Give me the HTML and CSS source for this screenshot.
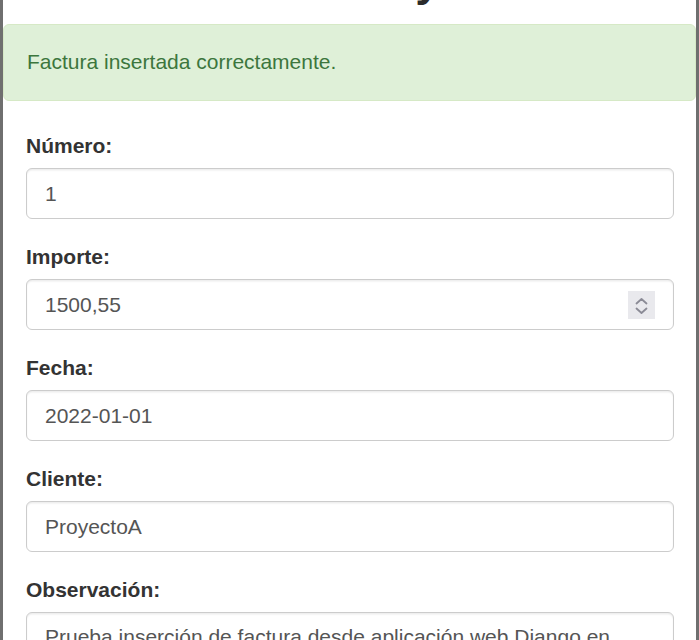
FILE: index.html
```html
<!DOCTYPE html>
<html lang="es">
<head>
<meta charset="utf-8">
<title>Factura</title>
<link rel="stylesheet" href="styles.css">
</head>
<body>
<div class="sheet">
  <h2 class="title">Facturas Proyecto</h2>
  <div class="alert">Factura insertada correctamente.</div>
  <form class="form">
    <div class="group">
      <label class="label">Número:</label>
      <div class="field">1</div>
    </div>
    <div class="group">
      <label class="label">Importe:</label>
      <div class="field">
        <span class="value">1500,55</span>
        <span class="spin">
          <svg width="27" height="28" viewBox="0 0 27 28">
            <path d="M8.5 12.5 L13.5 8 L18.5 12.5" fill="none" stroke="#8b8b96" stroke-width="1.8" stroke-linecap="round" stroke-linejoin="round"/>
            <path d="M8.5 17.5 L13.5 22 L18.5 17.5" fill="none" stroke="#8b8b96" stroke-width="1.8" stroke-linecap="round" stroke-linejoin="round"/>
          </svg>
        </span>
      </div>
    </div>
    <div class="group">
      <label class="label">Fecha:</label>
      <div class="field">2022-01-01</div>
    </div>
    <div class="group">
      <label class="label">Cliente:</label>
      <div class="field">ProyectoA</div>
    </div>
    <div class="group">
      <label class="label">Observación:</label>
      <div class="field field-area">Prueba inserción de factura desde aplicación web Django en Python</div>
    </div>
  </form>
</div>
</body>
</html>
```

FILE: styles.css
```css
html, body {
  margin: 0;
  padding: 0;
  height: 100%;
  overflow: hidden;
}
body {
  background: #6f6f6f;
  font-family: "Liberation Sans", Arial, sans-serif;
  color: #333;
}
.sheet {
  margin: 0 3px;
  background: #fff;
  min-height: 100%;
  padding-top: 1px;
}
.title {
  margin: -45px 0 18px;
  padding-right: 26px;
  white-space: nowrap;
  font-size: 45px;
  line-height: 49.5px;
  font-weight: bold;
  color: #2b2b2b;
  text-align: center;
}
.alert {
  background: #dff0d8;
  border: 1px solid #d6e9c6;
  border-radius: 6px;
  color: #3c763d;
  font-size: 21px;
  line-height: 30px;
  padding: 22px 23px 23px;
  margin-bottom: 30px;
}
.form {
  padding: 0 22px 0 23px;
}
.group {
  margin-bottom: 22.5px;
}
.label {
  display: block;
  font-size: 21px;
  line-height: 30px;
  font-weight: bold;
  color: #333;
  margin-bottom: 7.5px;
}
.field {
  display: flex;
  align-items: center;
  justify-content: space-between;
  box-sizing: border-box;
  height: 51px;
  padding: 0 18px;
  border: 1px solid #ccc;
  border-radius: 6px;
  box-shadow: inset 0 1.5px 1.5px rgba(0, 0, 0, 0.075);
  font-size: 21px;
  line-height: 30px;
  color: #555;
  background: #fff;
}
.spin {
  display: flex;
  width: 27px;
  height: 28px;
  background: #e9e9ed;
}
.field-area {
  display: block;
  height: 140px;
  padding: 9px 18px;
}
```
